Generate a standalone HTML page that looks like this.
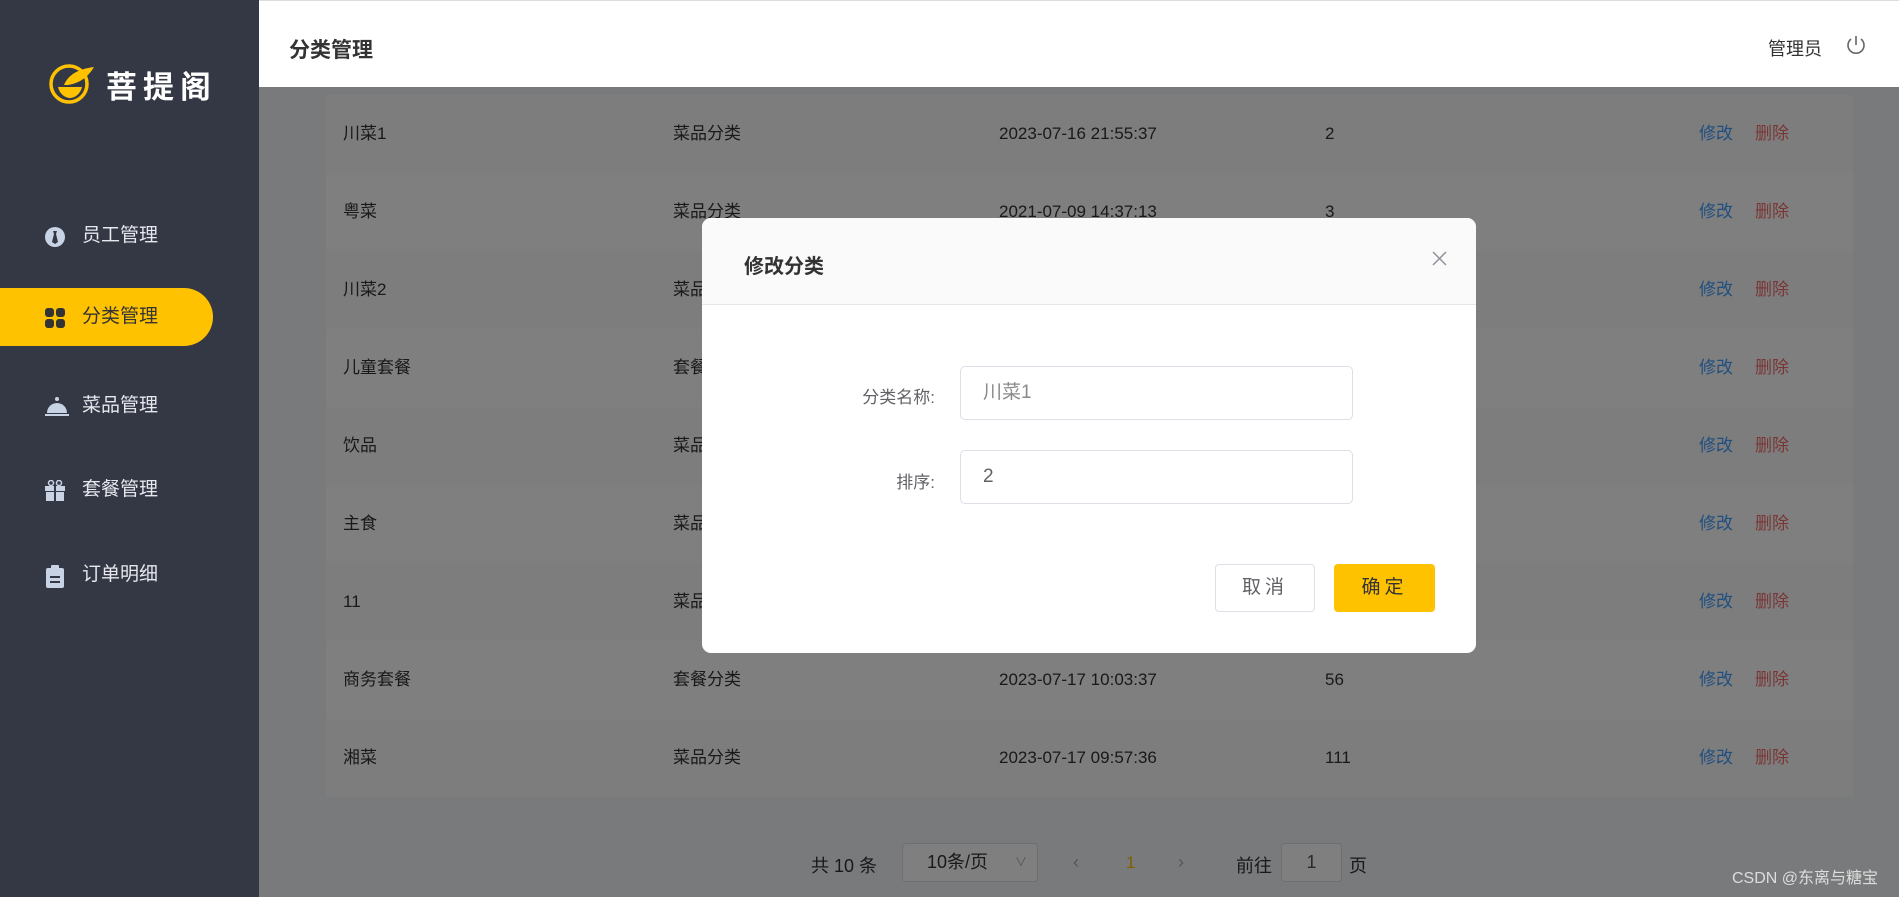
<!DOCTYPE html>
<html><head><meta charset="utf-8"><style>
*{margin:0;padding:0;box-sizing:border-box}
body{width:1899px;height:897px;overflow:hidden;position:relative;font-family:"Liberation Sans","Noto Sans CJK SC",sans-serif;background:#f3f4f7}
.abs{position:absolute}
.side{left:0;top:0;width:259px;height:897px;background:#343744;z-index:5}
.menu{left:0;width:259px;height:58px;color:#e6e8ee;font-size:19px;line-height:58px;padding-left:82px}
.menu svg{position:absolute;left:44px;top:19px}
.active{width:213px;background:#ffc200;color:#333;border-radius:0 29px 29px 0}
.head{left:259px;top:0;width:1640px;height:87px;background:#fff;border-top:1px solid #ddd;z-index:5}
.content{left:259px;top:87px;width:1640px;height:810px;background:#f3f4f7}
.row{left:326px;width:1527px;height:78px;font-size:17px;color:#333;line-height:78px}
.row span{position:absolute;top:0}
.mask{left:259px;top:87px;width:1640px;height:810px;background:rgba(0,0,0,.5)}
.modal{left:702px;top:218px;width:774px;height:435px;background:#fff;border-radius:9px;overflow:hidden;z-index:6}
.inp{position:absolute;left:258px;width:393px;height:54px;border:1px solid #dcdfe6;border-radius:5px;font-size:19px;color:#606266;padding-left:22px;line-height:52px}
.lab{position:absolute;right:541px;font-size:17px;color:#606266;width:200px;text-align:right}
</style></head><body>
<div class="abs side">
  <svg class="abs" style="left:48px;top:63px" width="50" height="42" viewBox="0 0 50 42"><circle cx="21" cy="21" r="18" fill="none" stroke="#ffc200" stroke-width="3.5"/><path d="M10 24h24c-2 8-8 11-12 11s-10-3-12-11z" fill="#ffc200"/><path d="M16 22c4-10 14-16 30-18-6 10-14 16-26 18z" fill="#ffc200"/></svg>
  <div class="abs" style="left:106px;top:62px;color:#fff;font-size:31px;font-weight:bold;letter-spacing:6px">菩提阁</div>
  <div class="abs menu" style="top:207px"><svg width="22" height="22" viewBox="0 0 22 22"><circle cx="11" cy="11" r="10" fill="#c9d3e6"/><path d="M9 5h4l-1 3 2 8-3 2-3-2 2-8z" fill="#343744"/></svg>员工管理</div>
  <div class="abs menu active" style="top:288px"><svg width="22" height="22" viewBox="0 0 22 22" fill="#333"><rect x="1" y="1" width="9" height="9" rx="3"/><rect x="12" y="1" width="9" height="9" rx="3"/><rect x="1" y="12" width="9" height="9" rx="3"/><rect x="12" y="12" width="9" height="9" rx="3"/></svg>分类管理</div>
  <div class="abs menu" style="top:377px"><svg width="26" height="22" viewBox="0 0 26 22" fill="#c9d3e6"><circle cx="13" cy="3" r="2"/><path d="M3 17a10 10 0 0 1 20 0z"/><rect x="1" y="18" width="24" height="2"/></svg>菜品管理</div>
  <div class="abs menu" style="top:461px"><svg width="22" height="22" viewBox="0 0 22 22" fill="#c9d3e6"><rect x="1" y="6" width="20" height="5"/><rect x="2" y="12" width="18" height="9"/><circle cx="7" cy="3" r="2.5" fill="none" stroke="#c9d3e6" stroke-width="1.5"/><circle cx="15" cy="3" r="2.5" fill="none" stroke="#c9d3e6" stroke-width="1.5"/><rect x="10" y="6" width="2" height="15" fill="#343744"/></svg>套餐管理</div>
  <div class="abs menu" style="top:546px"><svg width="22" height="24" viewBox="0 0 22 24" fill="#c9d3e6"><rect x="2" y="3" width="18" height="20" rx="2"/><rect x="7" y="0" width="8" height="5" rx="1"/><rect x="6" y="11" width="10" height="2" fill="#343744"/><rect x="6" y="16" width="10" height="2" fill="#343744"/></svg>订单明细</div>
</div>
<div class="abs head">
  <div class="abs" style="left:30px;top:33px;font-size:21px;font-weight:bold;color:#333">分类管理</div>
  <div class="abs" style="left:1509px;top:34px;font-size:18px;color:#333">管理员</div>
  <svg class="abs" style="left:1586px;top:33px" width="22" height="22" viewBox="0 0 22 22" fill="none" stroke="#666" stroke-width="1.6"><path d="M6 5a8 8 0 1 0 10 0"/><path d="M11 2v9"/></svg>
</div>
<div class="abs content"></div>
<div class="abs" style="left:326px;top:95px;width:1527px;height:702px;background:#fff"></div>
<div class="abs row" style="top:95px;background:#fafafa"><span style="left:17px">川菜1</span><span style="left:347px">菜品分类</span><span style="left:673px">2023-07-16 21:55:37</span><span style="left:999px">2</span><span style="left:1373px;color:#409eff">修改</span><span style="left:1429px;color:#f56c6c">删除</span></div>
<div class="abs row" style="top:173px"><span style="left:17px">粤菜</span><span style="left:347px">菜品分类</span><span style="left:673px">2021-07-09 14:37:13</span><span style="left:999px">3</span><span style="left:1373px;color:#409eff">修改</span><span style="left:1429px;color:#f56c6c">删除</span></div>
<div class="abs row" style="top:251px;background:#fafafa"><span style="left:17px">川菜2</span><span style="left:347px">菜品分类</span><span style="left:1373px;color:#409eff">修改</span><span style="left:1429px;color:#f56c6c">删除</span></div>
<div class="abs row" style="top:329px"><span style="left:17px">儿童套餐</span><span style="left:347px">套餐分类</span><span style="left:1373px;color:#409eff">修改</span><span style="left:1429px;color:#f56c6c">删除</span></div>
<div class="abs row" style="top:407px;background:#fafafa"><span style="left:17px">饮品</span><span style="left:347px">菜品分类</span><span style="left:1373px;color:#409eff">修改</span><span style="left:1429px;color:#f56c6c">删除</span></div>
<div class="abs row" style="top:485px"><span style="left:17px">主食</span><span style="left:347px">菜品分类</span><span style="left:1373px;color:#409eff">修改</span><span style="left:1429px;color:#f56c6c">删除</span></div>
<div class="abs row" style="top:563px;background:#fafafa"><span style="left:17px">11</span><span style="left:347px">菜品分类</span><span style="left:1373px;color:#409eff">修改</span><span style="left:1429px;color:#f56c6c">删除</span></div>
<div class="abs row" style="top:641px"><span style="left:17px">商务套餐</span><span style="left:347px">套餐分类</span><span style="left:673px">2023-07-17 10:03:37</span><span style="left:999px">56</span><span style="left:1373px;color:#409eff">修改</span><span style="left:1429px;color:#f56c6c">删除</span></div>
<div class="abs row" style="top:719px;background:#fafafa"><span style="left:17px">湘菜</span><span style="left:347px">菜品分类</span><span style="left:673px">2023-07-17 09:57:36</span><span style="left:999px">111</span><span style="left:1373px;color:#409eff">修改</span><span style="left:1429px;color:#f56c6c">删除</span></div>
<div class="abs" style="left:811px;top:852px;font-size:18px;color:#333">共 10 条</div>
<div class="abs" style="left:902px;top:843px;width:136px;height:39px;border:1px solid #dcdfe6;border-radius:4px;font-size:18px;color:#333;line-height:37px;padding-left:24px;background:#fff">10条/页<span style="position:absolute;right:10px;color:#aaa;font-size:12px">∨</span></div>
<div class="abs" style="left:1073px;top:852px;font-size:18px;color:#aaa">‹</div>
<div class="abs" style="left:1126px;top:853px;font-size:17px;color:#ffc200">1</div>
<div class="abs" style="left:1178px;top:852px;font-size:18px;color:#aaa">›</div>
<div class="abs" style="left:1236px;top:852px;font-size:18px;color:#333">前往</div>
<div class="abs" style="left:1281px;top:843px;width:61px;height:39px;border:1px solid #dcdfe6;border-radius:4px;font-size:18px;color:#555;line-height:37px;text-align:center;background:#fff">1</div>
<div class="abs" style="left:1349px;top:852px;font-size:18px;color:#333">页</div>
<div class="abs mask"></div>
<div class="abs" style="left:1732px;top:864px;font-size:16px;color:#ddd">CSDN @东离与糖宝</div>
<div class="abs modal">
  <div class="abs" style="left:0;top:0;width:774px;height:87px;background:#fafafa;border-bottom:1px solid #e6e6e6"></div>
  <div class="abs" style="left:42px;top:32px;font-size:20px;font-weight:bold;color:#333">修改分类</div>
  <svg class="abs" style="left:730px;top:33px" width="15" height="15" viewBox="0 0 15 15" stroke="#909399" stroke-width="1.5"><path d="M1 1l13 13M14 1L1 14"/></svg>
  <div class="lab" style="top:165px">分类名称:</div>
  <div class="inp" style="top:148px;color:#8a8a8a">川菜1</div>
  <div class="lab" style="top:250px">排序:</div>
  <div class="inp" style="top:232px">2</div>
  <div class="abs" style="left:513px;top:346px;width:100px;height:48px;border:1px solid #dcdfe6;border-radius:4px;text-align:center;line-height:46px;font-size:19px;color:#606266;letter-spacing:4px">取消</div>
  <div class="abs" style="left:632px;top:346px;width:101px;height:48px;background:#ffc200;border-radius:4px;text-align:center;line-height:48px;font-size:19px;color:#333;letter-spacing:4px">确定</div>
</div>
</body></html>
